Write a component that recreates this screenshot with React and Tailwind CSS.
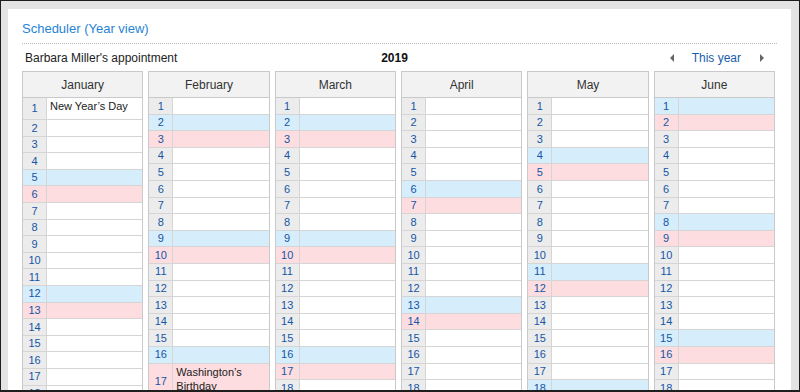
import React from 'react';

const months = ['January', 'February', 'March', 'April', 'May', 'June'];

const holidays = {
  '0-1': 'New Year’s Day',
  '1-17': 'Washington’s Birthday',
};

const DayRow = ({ month, day }) => {
  const wd = new Date(2019, month, day).getDay();
  const label = holidays[`${month}-${day}`];
  const tone = wd === 6 ? 'bg-[#d6edfb]' : wd === 0 ? 'bg-[#fddde0]' : '';
  return (
    <div className={`flex border-b border-[#d5d5d5] ${label ? '' : 'h-[16.6px]'} ${tone}`}>
      <div
        className={`w-[24px] shrink-0 flex items-center justify-center border-r border-[#d5d5d5] text-[11px] text-[#1456a6] ${
          tone || 'bg-[#ececec]'
        }`}
      >
        {day}
      </div>
      <div className={`flex-1 min-w-0 pl-[3px] text-[11px] leading-[14px] text-[#222] ${label ? 'pt-[1px] pb-[6px]' : ''}`}>
        {label}
      </div>
    </div>
  );
};

const MonthTable = ({ name, index }) => {
  const days = new Date(2019, index + 1, 0).getDate();
  return (
    <div className="border border-[#c9c9c9] self-start">
      <div className="h-[26px] flex items-center justify-center bg-[#f2f2f2] border-b border-[#c9c9c9] text-[12px] text-[#333]">
        {name}
      </div>
      {Array.from({ length: days }, (_, i) => (
        <DayRow key={i} month={index} day={i + 1} />
      ))}
    </div>
  );
};

export default function App() {
  return (
    <div
      className="w-[800px] h-[392px] overflow-hidden flex flex-col border border-b-2 border-[#1e1e1e] bg-[#e3e3e3] pl-[7px] pr-[8px] pt-[8px]"
      style={{ fontFamily: '"Liberation Sans", Arial, sans-serif' }}
    >
      <div className="flex-1 bg-white pl-[14px] pr-[16px] pt-[12px] overflow-hidden">
        <div className="border-b border-dotted border-[#b9b9b9] pb-[6px] -mr-[2px] text-[13px] leading-[16px] text-[#1f84d6]">
          Scheduler (Year view)
        </div>

        <div className="grid grid-cols-3 items-center h-[27px] pl-[3px] pr-[11px] text-[12px] leading-[16px]">
          <div className="text-[#222]">Barbara Miller's appointment</div>
          <div className="text-center font-bold text-[#111]">2019</div>
          <div className="flex items-center justify-end">
            <span className="w-0 h-0 border-y-[4px] border-y-transparent border-r-[4px] border-r-[#666]" />
            <span className="ml-[18px] mr-[19px] text-[#1a5cab]">This year</span>
            <span className="w-0 h-0 border-y-[4px] border-y-transparent border-l-[4px] border-l-[#666]" />
          </div>
        </div>

        <div className="grid grid-cols-6 gap-[5px] items-start">
          {months.map((m, i) => (
            <MonthTable key={m} name={m} index={i} />
          ))}
        </div>
      </div>
    </div>
  );
}
